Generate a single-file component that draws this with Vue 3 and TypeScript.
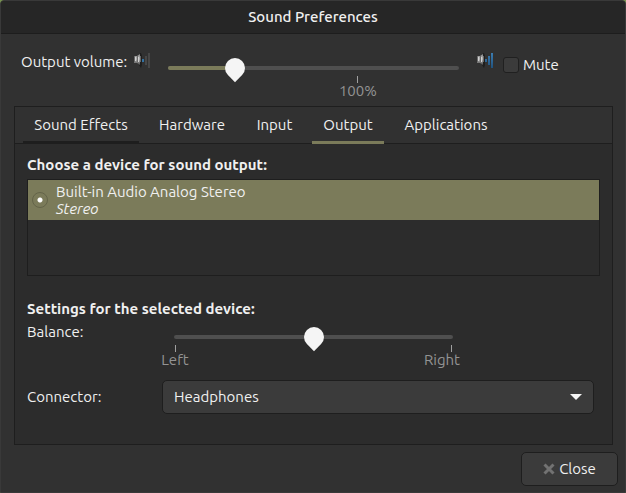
<script setup lang="ts">
import { computed, ref } from 'vue'

interface Mark {
  at: number
  label: string
}

const tabs = ['Sound Effects', 'Hardware', 'Input', 'Output', 'Applications']
const activeTab = ref('Output')
const lastTab = ref('Sound Effects')

const maxVolume = 153
const volume = ref(35)
const muted = ref(false)
const balance = ref(0)
const connector = ref('Headphones')
const device = ref('analog-stereo')

const volumeFill = computed(() => (volume.value / maxVolume) * 100)
const volumeMarks: Mark[] = [{ at: (100 / maxVolume) * 100, label: '100%' }]
const balanceMarks: Mark[] = [
  { at: 0, label: 'Left' },
  { at: 100, label: 'Right' },
]

function selectTab(name: string) {
  lastTab.value = activeTab.value
  activeTab.value = name
}
</script>

<template>
  <div class="window">
    <header class="titlebar"><h1>Sound Preferences</h1></header>

    <main class="content">
      <section class="volume">
        <label class="volume-label" for="volume">Output volume:</label>
        <svg class="speaker" viewBox="-1 0 18 16" aria-hidden="true">
          <defs>
            <linearGradient id="cone" x1="0" x2="0" y1="0" y2="15" gradientUnits="userSpaceOnUse">
              <stop offset="0.1" stop-color="#8a8a8a" />
              <stop offset="0.4" stop-color="#b4b4b4" />
              <stop offset="0.85" stop-color="#3c3c3c" />
            </linearGradient>
          </defs>
          <path d="M0 3h3l3-2v11l-3-2H0z" fill="url(#cone)" />
          <path d="M0 3h1v6H0zM3 3h1v6H3z" fill="#6a6a6a" />
          <path d="M1 4h1v4H1zM4 4h1v5H4z" fill="#d2d2d2" />
          <path d="M6 0h1l1 3v9l-1 3L5 12h1z" fill="#1e1e1e" />
          <path d="M6 3h1v6H6z" fill="#686868" />
          <path d="M8 6h2v3H8z" fill="#3272a3" />
          <path d="M11 3h2v9h-2zM14 0h2v15h-2z" fill="#474747" />
        </svg>
        <div class="scale">
          <div class="rail">
            <div class="fill" :style="{ width: volumeFill + '%' }"></div>
            <input id="volume" v-model.number="volume" type="range" min="0" :max="maxVolume" />
          </div>
          <div class="marks">
            <span v-for="m in volumeMarks" :key="m.label" class="mark" :style="{ marginLeft: m.at + '%' }"><span>{{ m.label }}</span></span>
          </div>
        </div>
        <svg class="speaker" viewBox="0 0 18 16" aria-hidden="true">
          <defs>
            <linearGradient id="bars" x1="0" x2="0" y1="0" y2="15" gradientUnits="userSpaceOnUse">
              <stop offset="0" stop-color="#3c7db2" />
              <stop offset="1" stop-color="#20527d" />
            </linearGradient>
          </defs>
          <path d="M0 3h3l3-2v11l-3-2H0z" fill="url(#cone)" />
          <path d="M0 3h1v6H0zM3 3h1v6H3z" fill="#6a6a6a" />
          <path d="M1 4h1v4H1zM4 4h1v5H4z" fill="#d2d2d2" />
          <path d="M6 0h1l1 3v9l-1 3L5 12h1z" fill="#1e1e1e" />
          <path d="M6 3h1v6H6z" fill="#686868" />
          <path d="M8 6h2v3H8zM11 3h2v9h-2zM14 0h2v15h-2z" fill="url(#bars)" />
        </svg>
        <label class="mute"><input v-model="muted" type="checkbox" />Mute</label>
      </section>

      <section class="notebook">
        <nav class="tabs" role="tablist">
          <button
            v-for="t in tabs"
            :key="t"
            type="button"
            role="tab"
            class="tab"
            :class="{ active: t === activeTab, last: t === lastTab }"
            :aria-selected="t === activeTab"
            @click="selectTab(t)"
          >{{ t }}</button>
        </nav>

        <div class="pane" role="tabpanel">
          <h2>Choose a device for sound output:</h2>
          <div class="devices">
            <label class="device">
              <input v-model="device" type="radio" name="device" value="analog-stereo" />
              <span>Built-in Audio Analog Stereo<br /><em>Stereo</em></span>
            </label>
          </div>

          <h2>Settings for the selected device:</h2>
          <div class="field balance">
            <label for="balance">Balance:</label>
            <div class="scale">
              <div class="rail">
                <input id="balance" v-model.number="balance" type="range" min="-100" max="100" />
              </div>
              <div class="marks">
                <span
                  v-for="m in balanceMarks"
                  :key="m.label"
                  class="mark"
                  :class="{ end: m.at === 100 }"
                  :style="{ marginLeft: m.at + '%' }"
                ><span>{{ m.label }}</span></span>
              </div>
            </div>
          </div>
          <div class="field connector">
            <label for="connector">Connector:</label>
            <div class="combo">
              <select id="connector" v-model="connector">
                <option>Headphones</option>
              </select>
              <svg viewBox="0 0 12 6" aria-hidden="true"><path d="M0 0h12L6 6z" fill="#f5f5f5" /></svg>
            </div>
          </div>
        </div>
      </section>

      <footer class="actions">
        <button type="button" class="close">
          <svg viewBox="0 0 12 12" aria-hidden="true">
            <path d="M1.5 1.5l9 9M10.500 1.500l-9 9" stroke="#727272" stroke-width="3" />
          </svg>
          Close
        </button>
      </footer>
    </main>
  </div>
</template>

<style>
body {
  background: #789350;
}
</style>

<style scoped>
* {
  box-sizing: border-box;
}
.window {
  display: flex;
  flex-direction: column;
  min-height: 100vh;
  border: 1px solid #393939;
  border-radius: 4px 4px 0 0;
  background: #313131;
  color: #f0f0f0;
  font: 15px/18px 'Ubuntu', 'Noto Sans', sans-serif;
  overflow: hidden;
}
button,
select {
  font: inherit;
  color: inherit;
}
h1,
h2 {
  margin: 0;
  font-size: 15px;
  font-weight: 700;
}
h1 {
  font-weight: 500;
}
.titlebar {
  height: 33px;
  padding-top: 7px;
  background: #262626;
  border-bottom: 1px solid #1d1d1d;
  text-align: center;
}
.content {
  flex: 1;
  display: flex;
  flex-direction: column;
  padding: 19px 7px 6px 13px;
}
.volume {
  display: flex;
  align-items: flex-start;
  height: 53px;
  padding-left: 7px;
}
.volume-label {
  width: 112px;
  white-space: nowrap;
}
.speaker {
  flex: none;
  width: 18px;
  height: 16px;
}
.scale {
  flex: 1;
  min-width: 0;
}
.volume .scale {
  margin: 13px 18px 0 17px;
}
.rail {
  height: 4px;
  border-radius: 2px;
  background: #4f4f4f;
}
.fill {
  height: 4px;
  margin-bottom: -4px;
  border-radius: 2px;
  background: #7b7b5a;
}
.rail input {
  appearance: none;
  position: relative;
  display: block;
  width: calc(100% + 20px);
  height: 20px;
  margin: 0 -10px;
  top: -8px;
  background: none;
}
.rail input::-webkit-slider-thumb {
  appearance: none;
  width: 20px;
  height: 20px;
  border-radius: 50% 50% 0 50%;
  background: #f5f5f5;
  transform: rotate(45deg);
}
.marks {
  display: grid;
  padding: 6px 1px 0;
}
.mark {
  grid-area: 1 / 1;
  display: flex;
  flex-direction: column;
  align-items: center;
  width: 0;
  line-height: 16px;
  white-space: nowrap;
  color: #939393;
}
.mark::before {
  content: '';
  flex: none;
  width: 1px;
  height: 7px;
  background: #a0a0a0;
}
.mark.end {
  align-items: flex-end;
}
.mark.end span {
  margin-right: -8px;
}
.mute {
  flex: none;
  display: flex;
  align-items: center;
  gap: 4px;
  width: 115px;
  margin: 3px 0 0 8px;
}
.mute input {
  appearance: none;
  width: 16px;
  height: 16px;
  margin: 0;
  border: 1px solid #202020;
  border-radius: 3px;
  background: #3b3b3b;
}
.mute input:checked {
  background: #7b7b5a;
}
.notebook {
  flex: 1;
  display: flex;
  flex-direction: column;
  margin-right: 5px;
  border: 1px solid #1e1e1e;
  background: #2c2c2c;
}
.tabs {
  display: grid;
  grid-template-columns: 116px 90px 59px 72px 108px;
  gap: 8px;
  height: 37px;
  padding: 0 8px;
  background: #313131;
  border-bottom: 1px solid #1e1e1e;
}
.tab {
  height: 37px;
  padding: 2px 0 0;
  border: 0;
  border-bottom: 3px solid transparent;
  background: none;
  white-space: nowrap;
}
.tab.last {
  border-color: #1e1e1e;
}
.tab.active {
  border-color: #7b7b5a;
}
.pane {
  display: flex;
  flex-direction: column;
  padding: 12px;
}
.devices {
  height: 97px;
  margin: 5px 0 24px;
  border: 1px solid #1e1e1e;
}
.device {
  display: flex;
  align-items: center;
  gap: 8px;
  height: 40px;
  padding: 0 4px;
  background: #7b7b5a;
  line-height: 17px;
}
.device input {
  appearance: none;
  width: 16px;
  height: 16px;
  margin: 0;
  border: 1px solid #646449;
  border-radius: 50%;
  background: radial-gradient(circle, #fff 2px, transparent 3px);
}
.field {
  display: flex;
}
.field label {
  width: 135px;
}
.balance {
  height: 62px;
  padding-top: 5px;
}
.balance .scale {
  margin: 12px 147px 0 12px;
}
.connector {
  align-items: center;
  height: 34px;
}
.combo {
  flex: 1;
  display: grid;
  align-items: center;
  margin-right: 6px;
}
.combo select {
  grid-area: 1 / 1;
  appearance: none;
  width: 100%;
  height: 34px;
  padding: 0 11px;
  border: 1px solid #1e1e1e;
  border-radius: 5px;
  background: #3b3b3b;
}
.combo svg {
  grid-area: 1 / 1;
  justify-self: end;
  width: 12px;
  height: 6px;
  margin-right: 12px;
  pointer-events: none;
}
.actions {
  display: flex;
  justify-content: flex-end;
  padding-top: 7px;
}
.close {
  display: flex;
  align-items: center;
  justify-content: center;
  gap: 4px;
  width: 97px;
  height: 34px;
  padding: 0;
  border: 1px solid #1e1e1e;
  border-radius: 5px;
  background: #3b3b3b;
}
.close svg {
  width: 12px;
  height: 12px;
}
</style>
